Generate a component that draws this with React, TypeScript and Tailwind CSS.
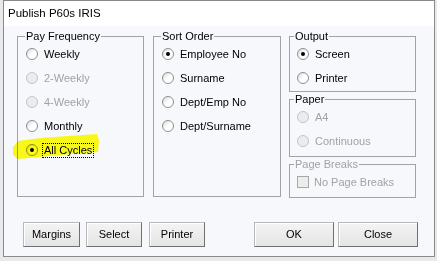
import React from "react";

type RadioProps = {
  label: string;
  checked?: boolean;
  disabled?: boolean;
  focused?: boolean;
};

function Radio({ label, checked, disabled, focused }: RadioProps) {
  return (
    <div className="flex items-center h-[24px]">
      <span
        className={
          disabled
            ? "w-[12px] h-[12px] rounded-full border border-[#c4c4c4] bg-[#ececec] shrink-0"
            : "w-[12px] h-[12px] rounded-full border border-[#8e8f8f] bg-gradient-to-br from-[#d8d8d8] via-white to-white flex items-center justify-center shrink-0"
        }
      >
        {checked && <span className="w-[4px] h-[4px] rounded-full bg-black" />}
      </span>
      <span
        className={
          (disabled ? "text-[#a2a2a2] " : "text-black ") +
          (focused
            ? "ml-[4px] px-[1px] leading-[13px] border border-dotted border-black"
            : "ml-[6px]")
        }
      >
        {label}
      </span>
    </div>
  );
}

type GroupProps = {
  title: string;
  className: string;
  inner: string;
  legend?: string;
  disabled?: boolean;
  children: React.ReactNode;
};

function Group({ title, className, inner, legend = "ml-[7px]", disabled, children }: GroupProps) {
  return (
    <fieldset className={"border border-[#a3a3a3] " + className}>
      <legend
        className={
          "px-[1px] leading-[12px] " +
          legend +
          " " +
          (disabled ? "text-[#a2a2a2]" : "text-black")
        }
      >
        {title}
      </legend>
      <div className={inner}>{children}</div>
    </fieldset>
  );
}

function Button({ label, className }: { label: string; className: string }) {
  return (
    <button
      className={
        "h-[25px] border border-[#b9b9b9] border-r-[#707070] border-b-[#707070] bg-gradient-to-b from-[#f4f4f4] to-[#e4e4e4] shadow-[inset_1px_1px_0_#ffffff] text-black text-[11px] " +
        className
      }
    >
      {label}
    </button>
  );
}

export default function App() {
  return (
    <div className="relative w-[437px] h-[261px] bg-[#e9e9ec] font-['Liberation_Sans',Arial,sans-serif] text-[11px] overflow-hidden">
      <div className="ml-[3px] w-[432px] h-[257px] border border-[#8a8a8a] flex flex-col">
        {/* Title bar */}
        <div className="h-[25px] bg-white flex items-center pl-[4px] text-[11.5px] text-black shrink-0">
          Publish P60s IRIS
        </div>

        {/* Body */}
        <div className="flex-1 bg-[#f7f8fc] pt-[4px]">
          <div className="flex items-start pl-[13px]">
            <Group title="Pay Frequency" className="w-[127px] h-[167px]" inner="pl-[8px]">
              <Radio label="Weekly" />
              <Radio label="2-Weekly" disabled />
              <Radio label="4-Weekly" disabled />
              <Radio label="Monthly" />
              <Radio label="All Cycles" checked focused />
            </Group>

            <Group title="Sort Order" className="ml-[9px] w-[128px] h-[167px]" inner="pl-[8px]">
              <Radio label="Employee No" checked />
              <Radio label="Surname" />
              <Radio label="Dept/Emp No" />
              <Radio label="Dept/Surname" />
            </Group>

            <div className="ml-[8px] flex flex-col">
              <Group title="Output" legend="ml-[4px]" className="w-[127px] h-[62px]" inner="pl-[7px]">
                <Radio label="Screen" checked />
                <Radio label="Printer" />
              </Group>
              <Group title="Paper" legend="ml-[4px]" className="mt-[1px] w-[127px] h-[64px]" inner="pl-[7px]">
                <Radio label="A4" disabled />
                <Radio label="Continuous" disabled />
              </Group>
              <Group
                title="Page Breaks"
                legend="ml-[4px]"
                disabled
                className="mt-[1px] w-[127px] h-[40px]"
                inner="pl-[7px]"
              >
                <div className="flex items-center h-[24px]">
                  <span className="w-[12px] h-[12px] border border-[#a8a8a8] bg-[#ececec] shrink-0" />
                  <span className="ml-[5px] text-[#a2a2a2]">No Page Breaks</span>
                </div>
              </Group>
            </div>
          </div>

          {/* Buttons */}
          <div className="flex mt-[24px] pl-[19px]">
            <Button label="Margins" className="w-[57px]" />
            <Button label="Select" className="ml-[6px] w-[56px]" />
            <Button label="Printer" className="ml-[7px] w-[56px]" />
            <Button label="OK" className="ml-[49px] w-[80px]" />
            <Button label="Close" className="ml-[4px] w-[80px]" />
          </div>
        </div>
      </div>

      {/* Highlighter annotation */}
      <svg
        className="absolute left-0 top-0 pointer-events-none mix-blend-multiply"
        width="437"
        height="261"
      >
        <polygon
          points="13,147 18,141 40,138 97,134 99,140 98,152 60,155 18,159 13,155"
          fill="#ffff1a"
        />
      </svg>
    </div>
  );
}
